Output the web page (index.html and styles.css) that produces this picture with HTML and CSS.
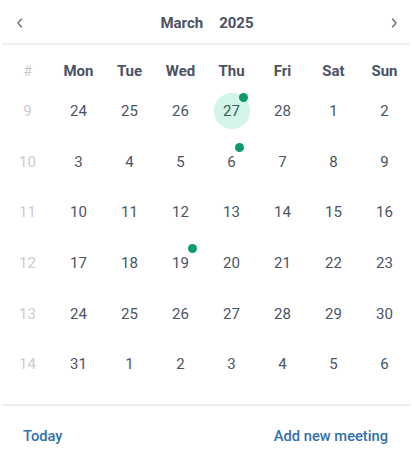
FILE: index.html
```html
<!DOCTYPE html>
<html lang="en">
<head>
<meta charset="utf-8">
<link rel="stylesheet" href="styles.css">
</head>
<body>
<div class="cal">
  <div class="cal-head">
    <button class="nav" aria-label="Previous month">
      <svg width="8" height="10" viewBox="0 0 8 10"><path d="M5.5 1 L2 5 L5.5 9" fill="none" stroke="#6b7280" stroke-width="1.4" stroke-linecap="round" stroke-linejoin="round"/></svg>
    </button>
    <div class="title"><span>March</span><span>2025</span></div>
    <button class="nav" aria-label="Next month">
      <svg width="8" height="10" viewBox="0 0 8 10"><path d="M2.5 1 L6 5 L2.5 9" fill="none" stroke="#6b7280" stroke-width="1.4" stroke-linecap="round" stroke-linejoin="round"/></svg>
    </button>
  </div>
  <div class="grid">
    <div class="wd wk">#</div><div class="wd">Mon</div><div class="wd">Tue</div><div class="wd">Wed</div><div class="wd">Thu</div><div class="wd">Fri</div><div class="wd">Sat</div><div class="wd">Sun</div>

    <div class="c wk">9</div><div class="c"><span class="n">24</span></div><div class="c"><span class="n">25</span></div><div class="c"><span class="n">26</span></div><div class="c today"><span class="n">27<i class="dot"></i></span></div><div class="c"><span class="n">28</span></div><div class="c"><span class="n">1</span></div><div class="c"><span class="n">2</span></div>

    <div class="c wk">10</div><div class="c"><span class="n">3</span></div><div class="c"><span class="n">4</span></div><div class="c"><span class="n">5</span></div><div class="c"><span class="n">6<i class="dot"></i></span></div><div class="c"><span class="n">7</span></div><div class="c"><span class="n">8</span></div><div class="c"><span class="n">9</span></div>

    <div class="c wk">11</div><div class="c"><span class="n">10</span></div><div class="c"><span class="n">11</span></div><div class="c"><span class="n">12</span></div><div class="c"><span class="n">13</span></div><div class="c"><span class="n">14</span></div><div class="c"><span class="n">15</span></div><div class="c"><span class="n">16</span></div>

    <div class="c wk">12</div><div class="c"><span class="n">17</span></div><div class="c"><span class="n">18</span></div><div class="c"><span class="n">19<i class="dot"></i></span></div><div class="c"><span class="n">20</span></div><div class="c"><span class="n">21</span></div><div class="c"><span class="n">22</span></div><div class="c"><span class="n">23</span></div>

    <div class="c wk">13</div><div class="c"><span class="n">24</span></div><div class="c"><span class="n">25</span></div><div class="c"><span class="n">26</span></div><div class="c"><span class="n">27</span></div><div class="c"><span class="n">28</span></div><div class="c"><span class="n">29</span></div><div class="c"><span class="n">30</span></div>

    <div class="c wk">14</div><div class="c"><span class="n">31</span></div><div class="c"><span class="n">1</span></div><div class="c"><span class="n">2</span></div><div class="c"><span class="n">3</span></div><div class="c"><span class="n">4</span></div><div class="c"><span class="n">5</span></div><div class="c"><span class="n">6</span></div>
  </div>
  <div class="cal-foot">
    <a class="link" href="#">Today</a>
    <a class="link" href="#">Add new meeting</a>
  </div>
</div>
</body>
</html>
```
FILE: styles.css
```css
* { box-sizing: border-box; }
html, body { margin: 0; padding: 0; background: #fff; }
body { font-family: Roboto, "Noto Sans", sans-serif; color: #4b5563; }

.cal { width: 408px; margin: 0 2px; }

.cal-head {
  height: 45px;
  display: flex;
  align-items: center;
  justify-content: space-between;
  padding: 2px 10px 0 12px;
  border-bottom: 2px solid #eceef1;
}
.nav {
  width: 12px; height: 20px; padding: 0; border: 0; background: none;
  display: flex; align-items: center; justify-content: center;
}
.title {
  display: flex; gap: 16px;
  font-size: 15px; font-weight: 700; color: #4a5263;
}

.grid {
  display: grid;
  grid-template-columns: repeat(8, 51px);
  grid-auto-rows: 50.6px;
  grid-template-rows: 41px;
}
.wd {
  padding-top: 16px;
  line-height: 20px;
  text-align: center;
  font-size: 15px;
  font-weight: 700;
  color: #4a5263;
}
.wd.wk { color: #c5c9cf; font-weight: 400; font-size: 14px; }

.c {
  display: flex; align-items: center; justify-content: center;
  font-size: 15px; line-height: 20px; color: #4b5563;
}
.c.wk { color: #c9ccd2; }
.n { position: relative; }
.today .n {
  width: 36px; height: 36px; border-radius: 50%;
  background: #d2f4ea; color: #2f6353;
  display: flex; align-items: center; justify-content: center;
}
.dot {
  position: absolute; width: 9px; height: 9px; border-radius: 50%;
  background: #0a9a6e; right: -8px; top: -9px;
}
.today .dot { right: 2px; top: 0; }

.cal-foot {
  margin-top: 14px;
  border-top: 2px solid #eceef1;
  height: 62px;
  display: flex; align-items: center; justify-content: space-between;
  padding: 0 22px 0 21px;
}
.link {
  text-decoration: none; color: #336fab;
  font-size: 14.7px; font-weight: 500;
}
```
